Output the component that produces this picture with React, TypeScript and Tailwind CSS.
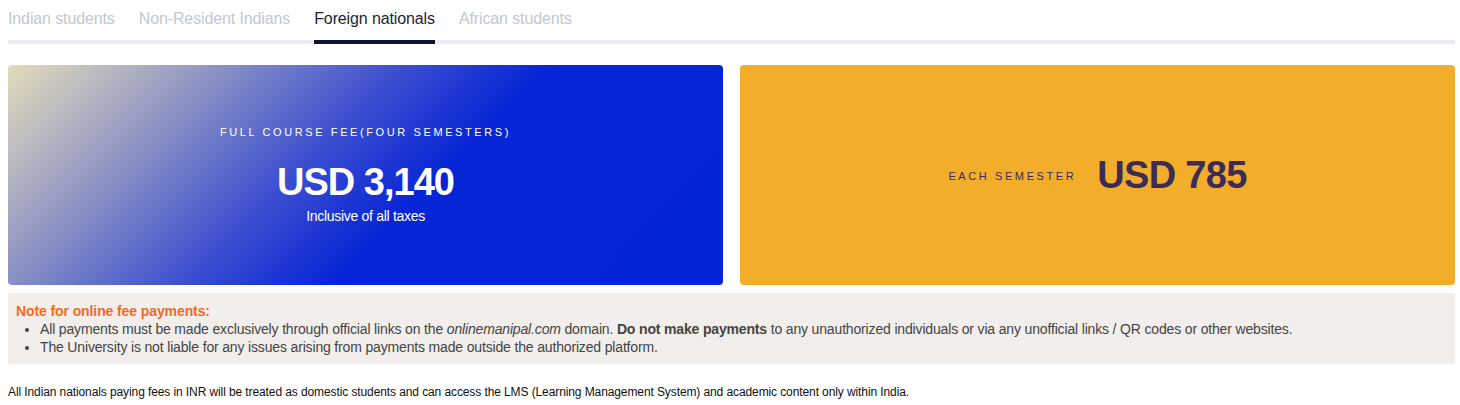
import React, { useState } from "react";

const tabs = [
  { id: "indian", label: "Indian students" },
  { id: "nri", label: "Non-Resident Indians" },
  { id: "foreign", label: "Foreign nationals" },
  { id: "african", label: "African students" },
];

export default function App() {
  const [active, setActive] = useState("foreign");

  return (
    <div className="w-full bg-white pl-2 pr-[5px] font-['Liberation_Sans',Arial,sans-serif] text-[#222]">
      {/* Tabs */}
      <div className="flex gap-6 border-b-4 border-[#e9ecf2]">
        {tabs.map((tab) => (
          <button
            key={tab.id}
            onClick={() => setActive(tab.id)}
            className={`-mb-1 border-b-4 pt-[9px] pb-[11px] text-base leading-5 tracking-[-0.12px] ${
              active === tab.id
                ? "border-[#0f1437] text-[#1a1f36]"
                : "border-transparent text-[#c4c7cf]"
            }`}
          >
            {tab.label}
          </button>
        ))}
      </div>

      {/* Fee cards */}
      <div className="mt-[21px] grid grid-cols-2 gap-[17px]">
        <div className="flex h-[220px] flex-col items-center justify-center rounded bg-[linear-gradient(135deg,#e3dcbc_0%,#8f95c4_22%,#3c4fd0_42%,#0725d6_58%,#0425d4_100%)] text-white">
          <div className="text-[11px] tracking-[2.6px]">FULL COURSE FEE(FOUR SEMESTERS)</div>
          <div className="mt-[20px] text-[38px] font-bold leading-[42px] tracking-[-1px]">USD 3,140</div>
          <div className="mt-[3px] text-sm tracking-[-0.3px]">Inclusive of all taxes</div>
        </div>
        <div className="flex h-[220px] items-center justify-center gap-[21px] rounded bg-[#f2ae2b] text-[#3d2b56]">
          <div className="mt-[2px] text-[11px] tracking-[2.6px]">EACH SEMESTER</div>
          <div className="text-[38px] font-bold leading-[42px] tracking-[-0.7px]">USD 785</div>
        </div>
      </div>

      {/* Note */}
      <div className="mt-2 bg-[#f1eeec] px-2 pt-[9px] pb-[8px] text-sm leading-[18px] text-[#444]">
        <div className="font-semibold text-[#f26b1d] tracking-[-0.1px]">Note for online fee payments:</div>
        <ul className="list-disc pl-6 tracking-[-0.16px]">
          <li>
            All payments must be made exclusively through official links on the{" "}
            <em>onlinemanipal.com</em> domain. <strong className="font-bold">Do not make payments</strong> to any
            unauthorized individuals or via any unofficial links / QR codes or other websites.
          </li>
          <li>The University is not liable for any issues arising from payments made outside the authorized platform.</li>
        </ul>
      </div>

      <p className="mt-[20px] pb-2 text-xs leading-4 tracking-[-0.1px] text-[#111]">
        All Indian nationals paying fees in INR will be treated as domestic students and can access the LMS (Learning
        Management System) and academic content only within India.
      </p>
    </div>
  );
}
